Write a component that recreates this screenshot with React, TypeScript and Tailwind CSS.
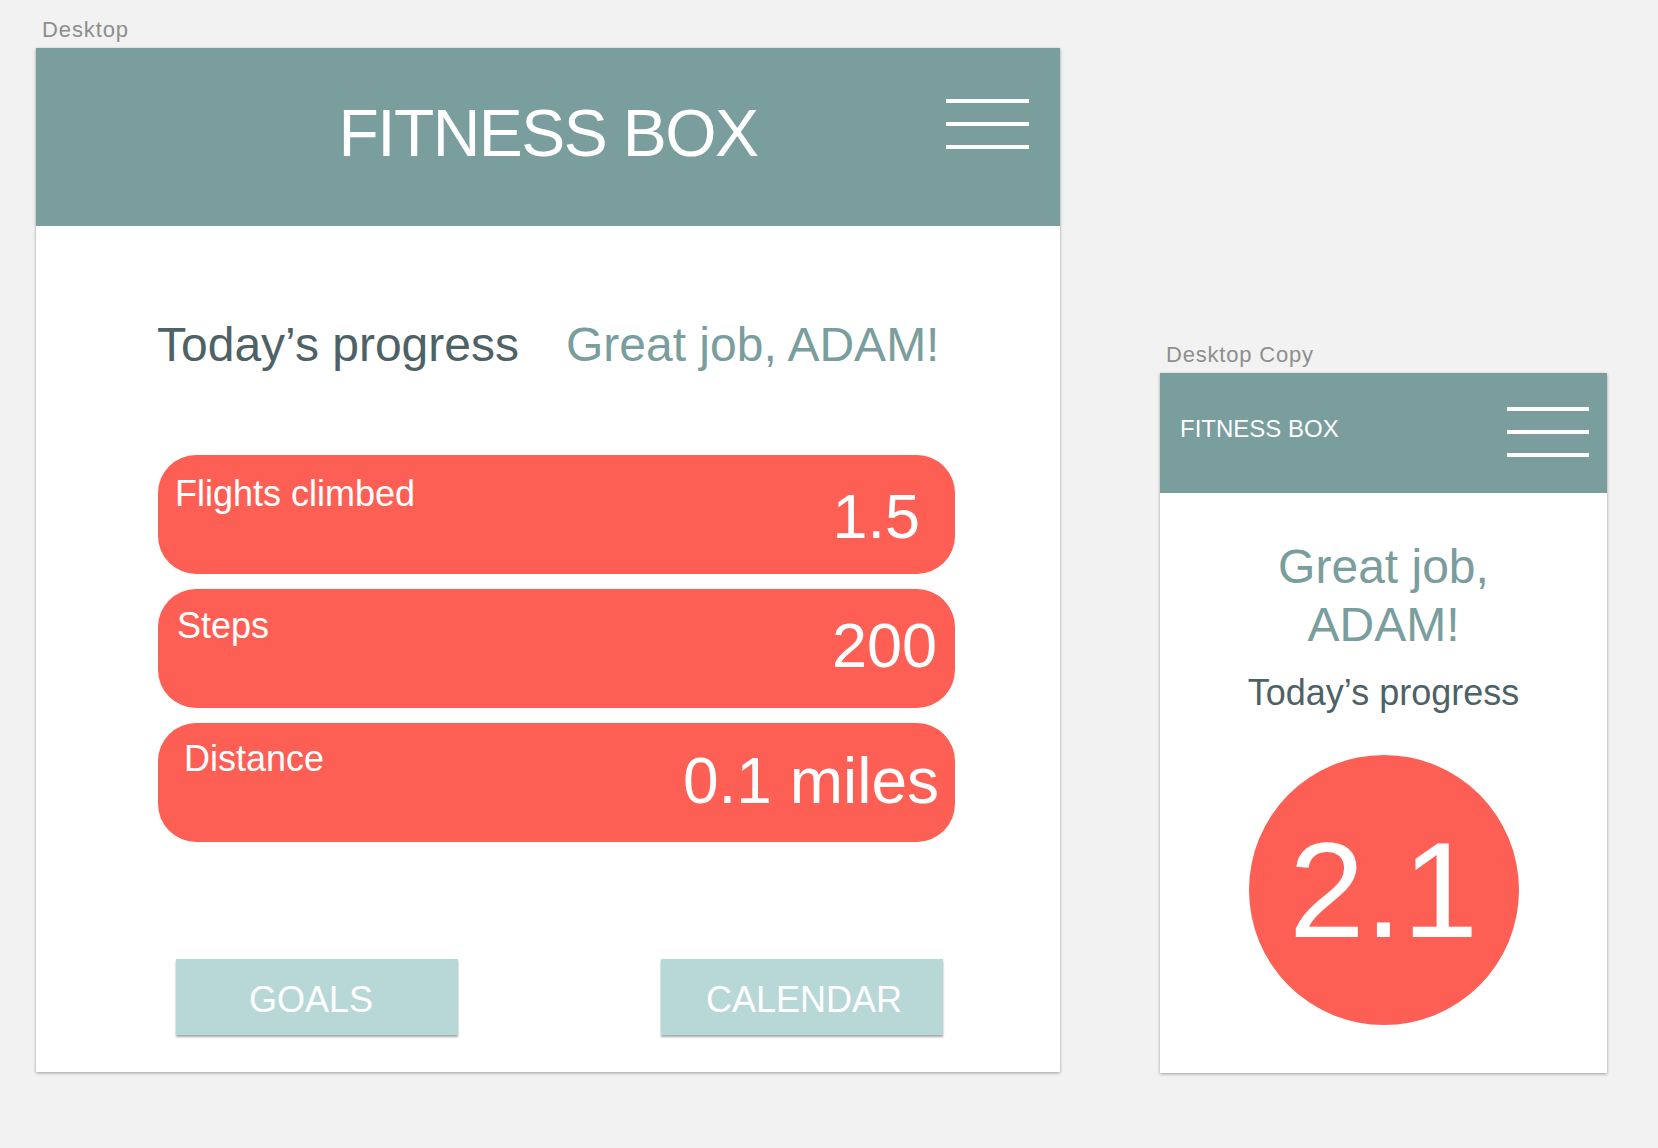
import React from "react";

function Burger({ small }: { small?: boolean }) {
  const line = small ? "h-[4px] w-[82px] bg-white" : "h-[4px] w-[83px] bg-white";
  return (
    <div className="flex flex-col gap-[19px]">
      <div className={line} />
      <div className={line} />
      <div className={line} />
    </div>
  );
}

function Card({
  label,
  value,
  labelCls,
  valueCls,
}: {
  label: string;
  value: string;
  labelCls: string;
  valueCls: string;
}) {
  return (
    <div className="h-[119px] rounded-[38px] bg-[#fe5f55] flex justify-between items-start text-white">
      <div className={labelCls}>{label}</div>
      <div className={valueCls}>{value}</div>
    </div>
  );
}

export default function App() {
  return (
    <div className="w-[1658px] h-[1148px] bg-[#f2f2f2] flex items-start pl-[36px] font-['Liberation_Sans',Arial,Helvetica,sans-serif]">
      {/* Desktop artboard */}
      <div className="flex flex-col pt-[18px]">
        <div className="h-[24px] leading-[24px] text-[22px] tracking-[0.9px] text-[#8e8e8e] pl-[6px] mb-[6px]">
          Desktop
        </div>
        <div className="w-[1024px] h-[1024px] bg-white shadow-[0_1px_3px_rgba(0,0,0,0.35)] flex flex-col">
          <div className="h-[178px] bg-[#7a9d9e] grid grid-cols-[1fr_auto_1fr] items-start">
            <div />
            <div className="pt-[52px] text-[66px] leading-none tracking-[-1.6px] text-white whitespace-nowrap">
              FITNESS BOX
            </div>
            <div className="justify-self-end pt-[51px] pr-[31px]">
              <Burger />
            </div>
          </div>

          <div className="flex pl-[121px] pt-[95px] gap-[47px] text-[48px] leading-none whitespace-nowrap">
            <div className="text-[#4e6266]">Today’s progress</div>
            <div className="text-[#7a9d9e]">Great job, ADAM!</div>
          </div>

          <div className="ml-[122px] mt-[86px] w-[797px] flex flex-col gap-[15px]">
            <Card
              label="Flights climbed"
              value="1.5"
              labelCls="pl-[17px] pt-[21px] text-[36px] leading-none"
              valueCls="pr-[35px] pt-[30px] text-[63px] leading-none"
            />
            <Card
              label="Steps"
              value="200"
              labelCls="pl-[19px] pt-[19px] text-[36px] leading-none"
              valueCls="pr-[18px] pt-[25px] text-[63px] leading-none"
            />
            <Card
              label="Distance"
              value="0.1 miles"
              labelCls="pl-[26px] pt-[18px] text-[36px] leading-none"
              valueCls="pr-[16px] pt-[26px] text-[64px] leading-none"
            />
          </div>

          <div className="flex ml-[140px] mt-[117px] gap-[203px]">
            <div className="w-[282px] h-[76px] bg-[#b8d8d8] shadow-[0_2px_2px_rgba(0,0,0,0.35)] flex items-center justify-center pt-[5px] pr-[12px] text-white text-[36px] leading-none">
              GOALS
            </div>
            <div className="w-[282px] h-[76px] bg-[#b8d8d8] shadow-[0_2px_2px_rgba(0,0,0,0.35)] flex items-center justify-center pt-[5px] pl-[4px] text-white text-[36px] leading-none">
              CALENDAR
            </div>
          </div>
        </div>
      </div>

      {/* Mobile artboard */}
      <div className="flex flex-col ml-[100px] pt-[343px]">
        <div className="h-[24px] leading-[24px] text-[22px] tracking-[0.8px] text-[#8e8e8e] pl-[6px] mb-[6px]">
          Desktop Copy
        </div>
        <div className="w-[447px] h-[700px] bg-white shadow-[0_1px_3px_rgba(0,0,0,0.35)] flex flex-col">
          <div className="h-[120px] bg-[#7a9d9e] flex justify-between items-start">
            <div className="pl-[20px] pt-[44px] text-[24px] leading-none text-white whitespace-nowrap">
              FITNESS BOX
            </div>
            <div className="pr-[18px] pt-[34px]">
              <Burger small />
            </div>
          </div>
          <div className="flex flex-col items-center">
            <div className="pt-[45px] text-[48px] leading-[58px] text-center text-[#7a9d9e] whitespace-nowrap">
              Great job,
              <br />
              ADAM!
            </div>
            <div className="mt-[21px] text-[36px] leading-none text-[#4e6266] whitespace-nowrap">
              Today’s progress
            </div>
            <div className="mt-[44px] w-[270px] h-[270px] rounded-full bg-[#fe5f55] flex items-center justify-center text-white text-[136px] leading-none">
              2.1
            </div>
          </div>
        </div>
      </div>
    </div>
  );
}
